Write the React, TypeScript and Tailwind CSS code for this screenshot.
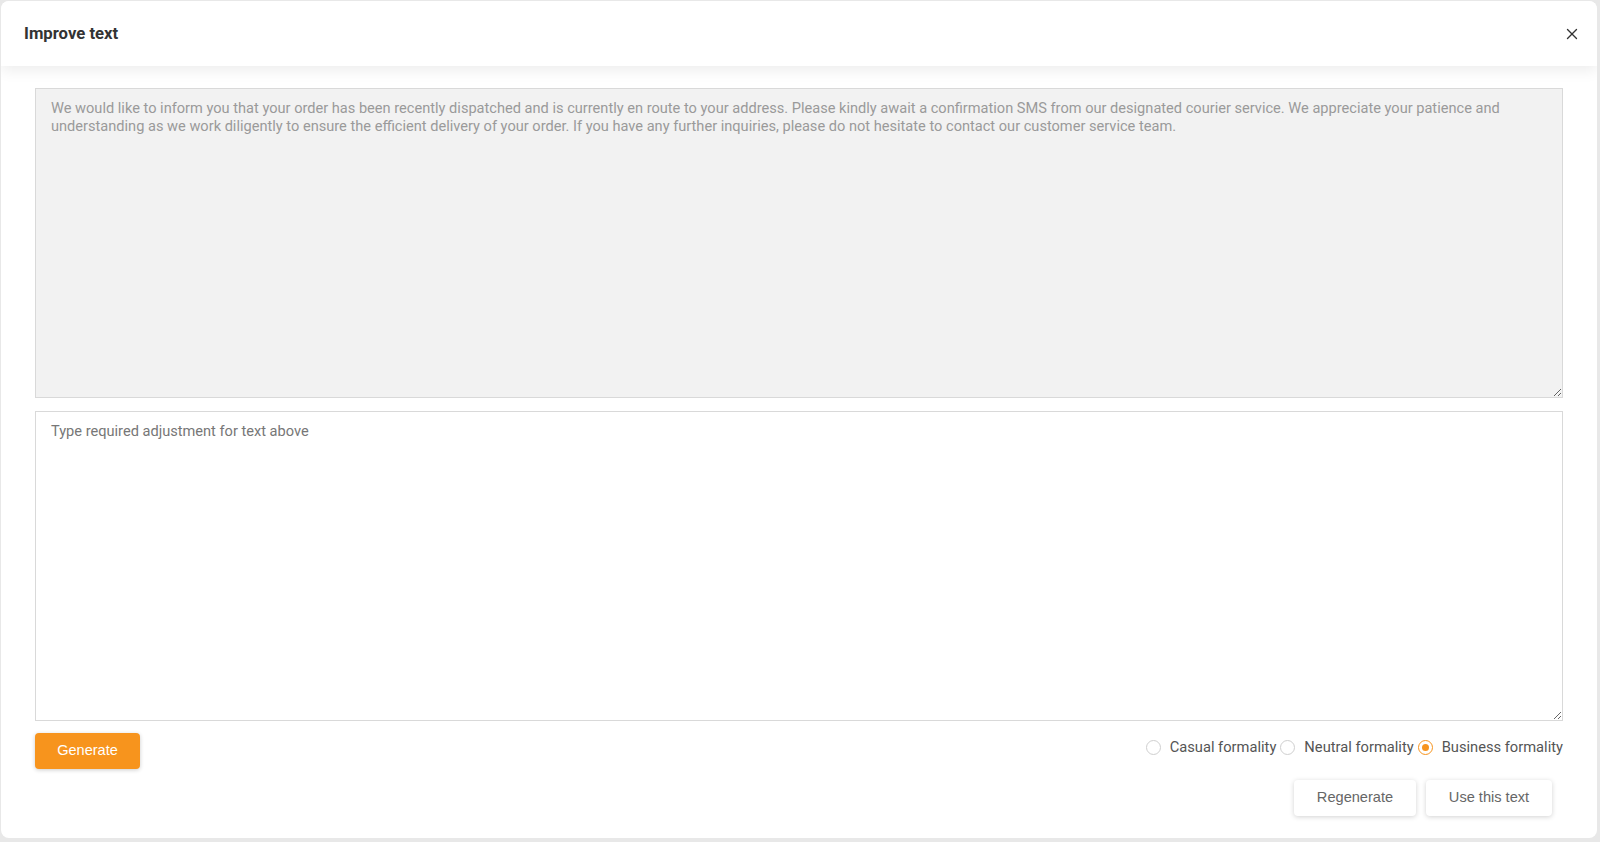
import React, { useState } from 'react';
import { X } from 'lucide-react';

const originalText =
  'We would like to inform you that your order has been recently dispatched and is currently en route to your address. Please kindly await a confirmation SMS from our designated courier service. We appreciate your patience and understanding as we work diligently to ensure the efficient delivery of your order. If you have any further inquiries, please do not hesitate to contact our customer service team.';

type Formality = 'casual' | 'neutral' | 'business';

const options: { id: Formality; label: string }[] = [
  { id: 'casual', label: 'Casual formality' },
  { id: 'neutral', label: 'Neutral formality' },
  { id: 'business', label: 'Business formality' },
];

export default function App() {
  const [adjustment, setAdjustment] = useState('');
  const [formality, setFormality] = useState<Formality>('business');

  return (
    <div
      className="w-[1600px] h-[842px] bg-[#e8e8e8] pt-[1px] pl-[1px] pr-[3px] pb-[4px]"
      style={{ fontFamily: 'Roboto, "Liberation Sans", sans-serif' }}
    >
      <div className="h-full bg-white rounded-[8px] flex flex-col overflow-hidden">
        {/* Header */}
        <div className="relative z-10 h-[65px] shrink-0 flex items-center justify-between pl-[23px] pr-[12px] bg-white shadow-[0_4px_14px_rgba(0,0,0,0.08)]">
          <h2 className="text-[16.7px] font-bold text-[#333]">Improve text</h2>
          <button className="p-1 text-[#333]">
            <X className="w-[18px] h-[18px]" strokeWidth={1.8} />
          </button>
        </div>

        {/* Body */}
        <div className="flex-1 flex flex-col px-[34px] pt-[22px]">
          <textarea
            readOnly
            value={originalText}
            className="h-[310px] w-full resize-y bg-[#f2f2f2] border border-[#d9d9d9] px-[15px] pt-[10px] pb-[8px] text-[14.6px] leading-[18px] text-[#9a9a9a] outline-none"
          />
          <textarea
            value={adjustment}
            onChange={(e) => setAdjustment(e.target.value)}
            placeholder="Type required adjustment for text above"
            className="mt-[13px] h-[310px] w-full resize-y bg-white border border-[#d9d9d9] px-[15px] pt-[10px] pb-[8px] text-[14.6px] leading-[18px] text-[#555] placeholder:text-[#777] outline-none"
          />

          <div className="mt-[12px] flex items-start justify-between">
            <button
              className="h-[36px] w-[105px] rounded-[4px] bg-[#f7941d] text-white text-[14.5px] shadow-[0_1px_4px_rgba(0,0,0,0.2)]"
              style={{ fontFamily: '"Liberation Sans", Arial, sans-serif' }}
            >
              Generate
            </button>

            <div className="mt-[3px] flex items-center gap-[4px]">
              {options.map((o) => (
                <label
                  key={o.id}
                  className="flex items-center gap-[9px] cursor-pointer"
                  onClick={() => setFormality(o.id)}
                >
                  <span
                    className={`w-[15px] h-[15px] rounded-full border flex items-center justify-center ${
                      formality === o.id ? 'border-[#f7941d] border-[1.5px]' : 'border-[#cfcfcf]'
                    }`}
                  >
                    {formality === o.id && <span className="w-[7px] h-[7px] rounded-full bg-[#f7941d]" />}
                  </span>
                  <span className="text-[14.7px] text-[#555]">{o.label}</span>
                </label>
              ))}
            </div>
          </div>

          <div
            className="mt-[11px] flex justify-end gap-[10px] pr-[11px]"
            style={{ fontFamily: '"Liberation Sans", Arial, sans-serif' }}
          >
            <button className="h-[36px] w-[122px] rounded-[4px] bg-white text-[14.6px] text-[#666] shadow-[0_1px_5px_rgba(0,0,0,0.18)]">
              Regenerate
            </button>
            <button className="h-[36px] w-[126px] rounded-[4px] bg-white text-[14.6px] text-[#666] shadow-[0_1px_5px_rgba(0,0,0,0.18)]">
              Use this text
            </button>
          </div>
        </div>
      </div>
    </div>
  );
}
